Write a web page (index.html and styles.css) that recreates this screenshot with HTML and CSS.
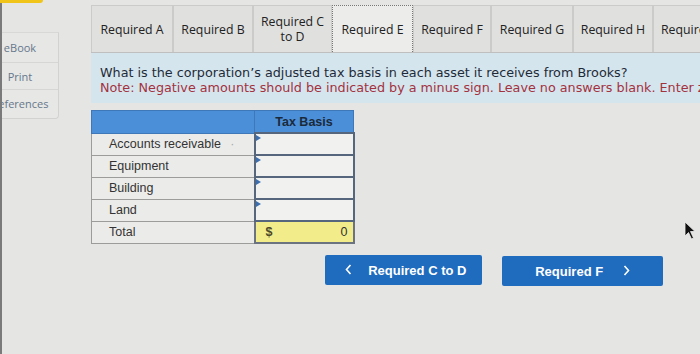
FILE: index.html
```html
<!DOCTYPE html>
<html lang="en">
<head>
    <meta charset="UTF-8">
    <meta name="viewport" content="width=device-width, initial-scale=1.0">
    <title>Required E</title>
    <link rel="stylesheet" href="styles.css">
</head>
<body>
    <div class="top-flag"></div>

    <div class="page">
        <div class="sidebar">
            <div class="side-item"><span>eBook</span></div>
            <div class="side-item"><span>Print</span></div>
            <div class="side-item"><span>References</span></div>
        </div>

        <div class="main">
            <div class="tabs">
                <div class="tab w82">Required A</div>
                <div class="tab w80">Required B</div>
                <div class="tab w79">Required C<br>to D</div>
                <div class="tab w81 active">Required E</div>
                <div class="tab w78">Required F</div>
                <div class="tab w82">Required G</div>
                <div class="tab w80">Required H</div>
                <div class="tab w80 cut">Required I</div>
            </div>

            <div class="question">
                <p>What is the corporation&rsquo;s adjusted tax basis in each asset it receives from Brooks?</p>
                <p class="note">Note: Negative amounts should be indicated by a minus sign. Leave no answers blank. Enter zero if applicable.</p>
            </div>

            <table class="basis">
                <thead>
                    <tr>
                        <th class="label-col"></th>
                        <th class="value-col">Tax Basis</th>
                    </tr>
                </thead>
                <tbody>
                    <tr>
                        <td class="label">Accounts receivable <span class="dot">&middot;</span></td>
                        <td class="entry"></td>
                    </tr>
                    <tr>
                        <td class="label">Equipment</td>
                        <td class="entry"></td>
                    </tr>
                    <tr>
                        <td class="label">Building</td>
                        <td class="entry"></td>
                    </tr>
                    <tr>
                        <td class="label">Land</td>
                        <td class="entry"></td>
                    </tr>
                    <tr class="total">
                        <td class="label">Total</td>
                        <td class="sum"><span class="cur">$</span><span class="amt">0</span></td>
                    </tr>
                </tbody>
            </table>

            <div class="nav">
                <button class="nav-btn prev">
                    <svg class="chev" width="7" height="11" viewBox="0 0 7 11"><polyline points="5.5,1 1.5,5.5 5.5,10" fill="none" stroke="#fff" stroke-width="1.6"/></svg>
                    Required C to D
                </button>
                <button class="nav-btn next">
                    Required F
                    <svg class="chev" width="7" height="11" viewBox="0 0 7 11"><polyline points="1.5,1 5.5,5.5 1.5,10" fill="none" stroke="#fff" stroke-width="1.6"/></svg>
                </button>
            </div>
        </div>
    </div>

    <svg class="cursor" width="14" height="20" viewBox="0 0 14 20">
        <path d="M1 1 L1 15 L4.5 11.5 L7.5 18 L9.5 17 L6.5 10.5 L11 10.5 Z" fill="#111" stroke="#eee" stroke-width="0.8"/>
    </svg>
</body>
</html>
```

FILE: styles.css
```css
body {
    margin: 0;
    background: #e5e5e3;
    border-left: 2px solid #7a7a7a;
    height: 354px;
    overflow: hidden;
    font-family: "Open Sans", "DejaVu Sans", sans-serif;
    color: #222;
}

.top-flag {
    position: absolute;
    left: 0;
    top: 0;
    width: 43px;
    height: 3px;
    background: #f0c419;
    border-radius: 0 0 4px 0;
}

.page {
    display: flex;
    align-items: flex-start;
}

/* left tools */
.sidebar {
    margin-top: 32px;
    width: 56px;
    border-right: 1px solid #d2d2d0;
    border-bottom: 1px solid #d2d2d0;
    border-top: 1px solid #d8d8d6;
    border-radius: 0 0 4px 0;
    overflow: hidden;
    background: #e7e7e5;
    flex-shrink: 0;
}

.side-item {
    margin-left: -22px;
    width: 80px;
    text-align: center;
    font-size: 11px;
    color: #66788c;
    border-bottom: 1px solid #d6d6d4;
    white-space: nowrap;
}

.side-item:nth-child(1) { height: 29px; line-height: 29px; }
.side-item:nth-child(2) { height: 26px; line-height: 28px; }
.side-item:nth-child(3) { height: 28px; line-height: 28px; border-bottom: none; }

.main {
    margin-left: 32px;
    padding-top: 5px;
    flex: 1;
    min-width: 0;
}

/* tabs */
.tabs {
    display: flex;
    height: 47px;
    border-bottom: 1px solid #bfbfbf;
    overflow: hidden;
    white-space: nowrap;
}

.tab {
    flex-shrink: 0;
    box-sizing: border-box;
    height: 47px;
    display: flex;
    align-items: center;
    justify-content: center;
    text-align: center;
    font-size: 12.3px;
    line-height: 15px;
    background: #e0e0de;
    border: 1px solid #cbcbc9;
    border-bottom: none;
    color: #222;
}

.w78 { width: 78px; }
.w79 { width: 79px; }
.w80 { width: 80px; }
.w81 { width: 81px; }
.w82 { width: 82px; }

.tab.active {
    background: #ececea;
    border: 1px dotted #777;
    border-bottom: none;
}

.tab.cut {
    justify-content: flex-start;
    padding-left: 7px;
}

/* question */
.question {
    background: #d5e5ed;
    padding: 12px 0 8px 9px;
    font-family: "DejaVu Sans", Verdana, sans-serif;
    font-size: 12.75px;
    line-height: 15px;
    white-space: nowrap;
    overflow: hidden;
}

.question p {
    margin: 0;
    color: #1e2b38;
}

.question .note {
    color: #a3323f;
}

/* table */
.basis {
    margin-top: 7px;
    border-collapse: collapse;
    font-family: "Liberation Sans", Arial, sans-serif;
    font-size: 12.5px;
}

.basis th {
    height: 21px;
    padding: 0;
    background: #4b8fd8;
    border: 1px solid #3f78b8;
    color: #1b2a3a;
    font-weight: bold;
    font-size: 12.5px;
}

.label-col { width: 162px; }
.value-col { width: 98px; }

.basis td {
    height: 20px;
    padding: 0;
    border: 1px solid #9c9c9a;
}

.basis .label {
    background: #ebebe9;
    padding-left: 17px;
    color: #333;
}

.dot {
    color: #aaa;
    margin-left: 6px;
}

.basis .entry {
    border: 2px solid #56667c;
    background: #f1f1ef;
    position: relative;
}

.entry::before {
    content: "";
    position: absolute;
    left: 0;
    top: 1px;
    border-left: 5px solid #3d6fae;
    border-top: 3px solid transparent;
    border-bottom: 3px solid transparent;
}

.total .sum {
    background: #f2ec8a;
    border: 2px solid #6b7280;
    padding: 0 5px 0 10px;
}

.cur {
    color: #4b4a2a;
    font-weight: bold;
}

.amt {
    float: right;
    color: #333;
}

/* navigation */
.nav {
    display: flex;
    gap: 20px;
    margin-top: 11px;
    padding-left: 234px;
}

.nav-btn {
    height: 30px;
    border: none;
    border-radius: 2px;
    background: #1f6cbf;
    color: #fff;
    font-family: "Liberation Sans", Arial, sans-serif;
    font-weight: bold;
    font-size: 13px;
    cursor: pointer;
}

.prev {
    width: 157px;
}

.next {
    width: 161px;
    margin-top: 1px;
}

.prev .chev {
    margin-right: 13px;
    margin-left: 4px;
}

.next .chev {
    margin-left: 16px;
}

.cursor {
    position: absolute;
    left: 684px;
    top: 221px;
}
```
